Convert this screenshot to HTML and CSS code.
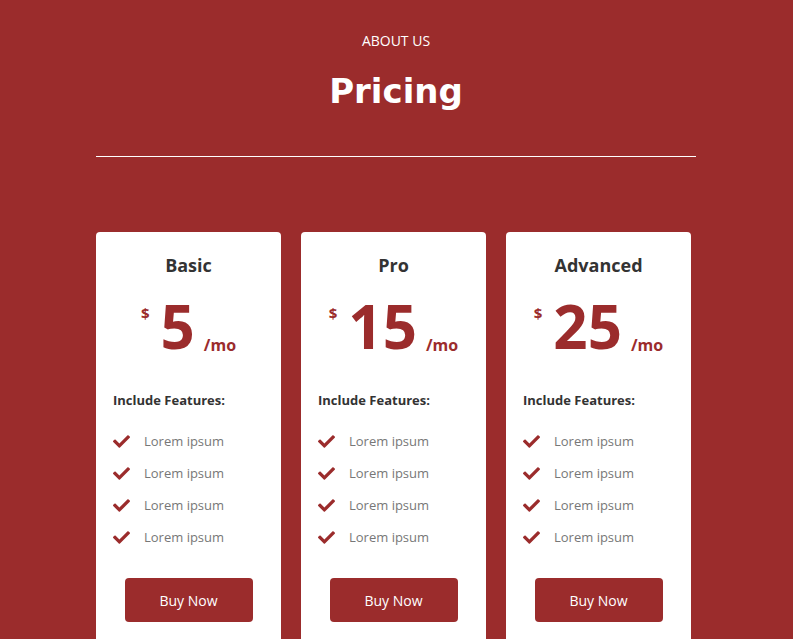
FILE: index.html
```html
<!DOCTYPE html>
<html lang="en">
  <head>
    <meta charset="UTF-8" />
    <meta name="viewport" content="width=device-width, initial-scale=1.0" />
    <title>Pricing</title>
    <link rel="stylesheet" href="styles.css">
  </head>
  <body>
    <section class="pricing">
      <div class="pricing-head">
        <p class="eyebrow">ABOUT US</p>
        <h1>Pricing</h1>
      </div>
      <hr class="divider" />

      <div class="plans">
        <div class="plan">
          <h2>Basic</h2>
          <div class="price">
            <span class="currency">$</span>
            <span class="amount">5</span>
            <span class="period">/mo</span>
          </div>
          <h3>Include Features:</h3>
          <ul class="features">
            <li><svg class="check" viewBox="0 0 512 512"><path d="M173.9 439.4l-166.4-166.4c-10-10-10-26.2 0-36.2l36.2-36.2c10-10 26.2-10 36.2 0L192 312.7 432.1 72.6c10-10 26.2-10 36.2 0l36.2 36.2c10 10 10 26.2 0 36.2L210.1 439.4c-10 10-26.2 10-36.2 0z"/></svg>Lorem ipsum</li>
            <li><svg class="check" viewBox="0 0 512 512"><path d="M173.9 439.4l-166.4-166.4c-10-10-10-26.2 0-36.2l36.2-36.2c10-10 26.2-10 36.2 0L192 312.7 432.1 72.6c10-10 26.2-10 36.2 0l36.2 36.2c10 10 10 26.2 0 36.2L210.1 439.4c-10 10-26.2 10-36.2 0z"/></svg>Lorem ipsum</li>
            <li><svg class="check" viewBox="0 0 512 512"><path d="M173.9 439.4l-166.4-166.4c-10-10-10-26.2 0-36.2l36.2-36.2c10-10 26.2-10 36.2 0L192 312.7 432.1 72.6c10-10 26.2-10 36.2 0l36.2 36.2c10 10 10 26.2 0 36.2L210.1 439.4c-10 10-26.2 10-36.2 0z"/></svg>Lorem ipsum</li>
            <li><svg class="check" viewBox="0 0 512 512"><path d="M173.9 439.4l-166.4-166.4c-10-10-10-26.2 0-36.2l36.2-36.2c10-10 26.2-10 36.2 0L192 312.7 432.1 72.6c10-10 26.2-10 36.2 0l36.2 36.2c10 10 10 26.2 0 36.2L210.1 439.4c-10 10-26.2 10-36.2 0z"/></svg>Lorem ipsum</li>
          </ul>
          <div class="plan-button"><button>Buy Now</button></div>
        </div>

        <div class="plan">
          <h2>Pro</h2>
          <div class="price">
            <span class="currency">$</span>
            <span class="amount">15</span>
            <span class="period">/mo</span>
          </div>
          <h3>Include Features:</h3>
          <ul class="features">
            <li><svg class="check" viewBox="0 0 512 512"><path d="M173.9 439.4l-166.4-166.4c-10-10-10-26.2 0-36.2l36.2-36.2c10-10 26.2-10 36.2 0L192 312.7 432.1 72.6c10-10 26.2-10 36.2 0l36.2 36.2c10 10 10 26.2 0 36.2L210.1 439.4c-10 10-26.2 10-36.2 0z"/></svg>Lorem ipsum</li>
            <li><svg class="check" viewBox="0 0 512 512"><path d="M173.9 439.4l-166.4-166.4c-10-10-10-26.2 0-36.2l36.2-36.2c10-10 26.2-10 36.2 0L192 312.7 432.1 72.6c10-10 26.2-10 36.2 0l36.2 36.2c10 10 10 26.2 0 36.2L210.1 439.4c-10 10-26.2 10-36.2 0z"/></svg>Lorem ipsum</li>
            <li><svg class="check" viewBox="0 0 512 512"><path d="M173.9 439.4l-166.4-166.4c-10-10-10-26.2 0-36.2l36.2-36.2c10-10 26.2-10 36.2 0L192 312.7 432.1 72.6c10-10 26.2-10 36.2 0l36.2 36.2c10 10 10 26.2 0 36.2L210.1 439.4c-10 10-26.2 10-36.2 0z"/></svg>Lorem ipsum</li>
            <li><svg class="check" viewBox="0 0 512 512"><path d="M173.9 439.4l-166.4-166.4c-10-10-10-26.2 0-36.2l36.2-36.2c10-10 26.2-10 36.2 0L192 312.7 432.1 72.6c10-10 26.2-10 36.2 0l36.2 36.2c10 10 10 26.2 0 36.2L210.1 439.4c-10 10-26.2 10-36.2 0z"/></svg>Lorem ipsum</li>
          </ul>
          <div class="plan-button"><button>Buy Now</button></div>
        </div>

        <div class="plan">
          <h2>Advanced</h2>
          <div class="price">
            <span class="currency">$</span>
            <span class="amount">25</span>
            <span class="period">/mo</span>
          </div>
          <h3>Include Features:</h3>
          <ul class="features">
            <li><svg class="check" viewBox="0 0 512 512"><path d="M173.9 439.4l-166.4-166.4c-10-10-10-26.2 0-36.2l36.2-36.2c10-10 26.2-10 36.2 0L192 312.7 432.1 72.6c10-10 26.2-10 36.2 0l36.2 36.2c10 10 10 26.2 0 36.2L210.1 439.4c-10 10-26.2 10-36.2 0z"/></svg>Lorem ipsum</li>
            <li><svg class="check" viewBox="0 0 512 512"><path d="M173.9 439.4l-166.4-166.4c-10-10-10-26.2 0-36.2l36.2-36.2c10-10 26.2-10 36.2 0L192 312.7 432.1 72.6c10-10 26.2-10 36.2 0l36.2 36.2c10 10 10 26.2 0 36.2L210.1 439.4c-10 10-26.2 10-36.2 0z"/></svg>Lorem ipsum</li>
            <li><svg class="check" viewBox="0 0 512 512"><path d="M173.9 439.4l-166.4-166.4c-10-10-10-26.2 0-36.2l36.2-36.2c10-10 26.2-10 36.2 0L192 312.7 432.1 72.6c10-10 26.2-10 36.2 0l36.2 36.2c10 10 10 26.2 0 36.2L210.1 439.4c-10 10-26.2 10-36.2 0z"/></svg>Lorem ipsum</li>
            <li><svg class="check" viewBox="0 0 512 512"><path d="M173.9 439.4l-166.4-166.4c-10-10-10-26.2 0-36.2l36.2-36.2c10-10 26.2-10 36.2 0L192 312.7 432.1 72.6c10-10 26.2-10 36.2 0l36.2 36.2c10 10 10 26.2 0 36.2L210.1 439.4c-10 10-26.2 10-36.2 0z"/></svg>Lorem ipsum</li>
          </ul>
          <div class="plan-button"><button>Buy Now</button></div>
        </div>
      </div>
    </section>
  </body>
</html>
```

FILE: styles.css
```css
body {
  font-family: "Open Sans", Arial, sans-serif;
  background-color: #9b2c2c;
  color: #fff;
  margin: 0;
  padding: 0;
}

.pricing {
  width: 600px;
  margin: 0 96px;
  padding-top: 32px;
}

.pricing-head {
  text-align: center;
}

.eyebrow {
  margin: 0;
  font-size: 14px;
  line-height: 18px;
}

h1 {
  margin: 19px 0 0;
  font-family: "DejaVu Sans", "Open Sans", sans-serif;
  font-size: 34px;
  line-height: 44px;
  font-weight: bold;
}

.divider {
  margin: 43px 0 0;
  border: none;
  border-top: 1px solid #fff;
}

.plans {
  display: flex;
  gap: 20px;
  margin-top: 75px;
}

.plan {
  width: 185px;
  background-color: #fff;
  border-radius: 4px 4px 0 0;
  padding: 21px 0 20px;
  color: #333;
}

h2 {
  margin: 0;
  text-align: center;
  font-size: 18px;
  line-height: 24px;
  font-weight: bold;
  color: #333;
}

.price {
  display: flex;
  justify-content: center;
  align-items: flex-start;
  margin-top: 18px;
  color: #9b2c2c;
  font-weight: bold;
}

.currency {
  font-size: 15px;
  line-height: 20px;
  margin-top: 8px;
  margin-right: 11px;
}

.amount {
  font-size: 60px;
  line-height: 62px;
}

.period {
  font-size: 16px;
  line-height: 20px;
  margin-top: 40px;
  margin-left: 9px;
}

h3 {
  margin: 34px 0 0 17px;
  font-size: 13px;
  line-height: 18px;
  font-weight: bold;
  color: #333;
}

.features {
  list-style: none;
  margin: 16px 0 0;
  padding: 0 0 0 17px;
}

.features li {
  display: flex;
  align-items: center;
  height: 32px;
  font-size: 13px;
  color: #777;
}

.check {
  width: 17px;
  height: 17px;
  fill: #9b2c2c;
  margin-right: 14px;
}

.plan-button {
  margin-top: 25px;
  text-align: center;
}

.plan-button button {
  width: 128px;
  height: 44px;
  background-color: #9b2c2c;
  color: #fff;
  border: none;
  border-radius: 4px;
  font-family: "Open Sans", Arial, sans-serif;
  font-size: 14px;
  cursor: pointer;
}
```
